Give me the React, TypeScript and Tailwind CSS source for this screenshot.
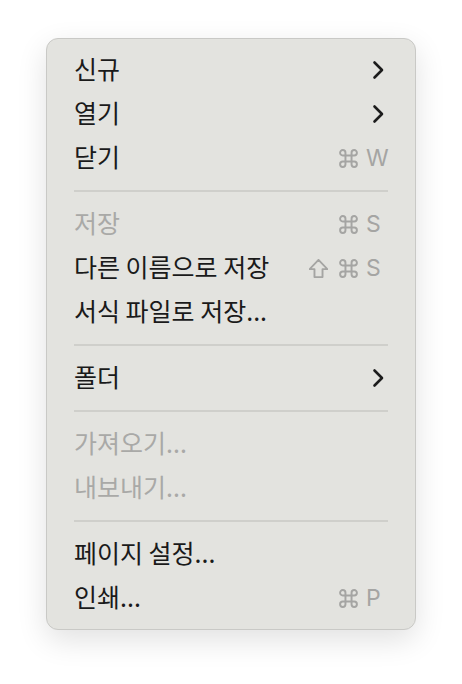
import React from "react";

type Item =
  | { kind: "sep" }
  | {
      kind: "item";
      label: string;
      disabled?: boolean;
      submenu?: boolean;
      shift?: boolean;
      key?: string;
    };

const items: Item[] = [
  { kind: "item", label: "신규", submenu: true },
  { kind: "item", label: "열기", submenu: true },
  { kind: "item", label: "닫기", key: "W" },
  { kind: "sep" },
  { kind: "item", label: "저장", disabled: true, key: "S" },
  { kind: "item", label: "다른 이름으로 저장", shift: true, key: "S" },
  { kind: "item", label: "서식 파일로 저장..." },
  { kind: "sep" },
  { kind: "item", label: "폴더", submenu: true },
  { kind: "sep" },
  { kind: "item", label: "가져오기...", disabled: true },
  { kind: "item", label: "내보내기...", disabled: true },
  { kind: "sep" },
  { kind: "item", label: "페이지 설정..." },
  { kind: "item", label: "인쇄...", key: "P" },
];

function Chevron() {
  return (
    <svg width="14" height="20" viewBox="0 0 14 20" className="mr-[3px] text-[#1c1c1c]">
      <path
        d="M2.5 2.5 L10 10 L2.5 17.5"
        fill="none"
        stroke="currentColor"
        strokeWidth="2.6"
        strokeLinecap="round"
        strokeLinejoin="round"
      />
    </svg>
  );
}

// command key glyph
function Cmd() {
  return (
    <svg width="19" height="19" viewBox="1.2 1.2 15.6 15.6">
      <path
        d="M6.5 6.5 H11.5 V11.5 H6.5 Z M6.5 6.5 V4.3 A2.2 2.2 0 1 0 4.3 6.5 H6.5 M11.5 6.5 V4.3 A2.2 2.2 0 1 1 13.7 6.5 H11.5 M6.5 11.5 V13.7 A2.2 2.2 0 1 1 4.3 11.5 H6.5 M11.5 11.5 V13.7 A2.2 2.2 0 1 0 13.7 11.5 H11.5"
        fill="none"
        stroke="currentColor"
        strokeWidth="1.6"
        strokeLinejoin="round"
      />
    </svg>
  );
}

function Shift() {
  return (
    <svg width="19" height="19" viewBox="0.5 0.5 17 17">
      <path
        d="M9 1.3 L17 9.6 H12.6 V16.7 H5.4 V9.6 H1 Z"
        fill="none"
        stroke="currentColor"
        strokeWidth="1.7"
        strokeLinejoin="round"
      />
    </svg>
  );
}

export default function App() {
  return (
    <div className="min-h-[684px] w-[462px] bg-white pt-[38px] pl-[46px]">
      <div
        className="w-[370px] rounded-[12px] border border-[#c9c9c6] bg-[#e3e3df] py-[9px] shadow-[0_10px_30px_rgba(0,0,0,0.12)]"
        style={{ fontFamily: '"Noto Sans CJK KR", "Noto Sans", sans-serif' }}
      >
        {items.map((it, i) =>
          it.kind === "sep" ? (
            <div key={i} className="flex h-[22px] items-center px-[27px]">
              <div className="h-[2px] w-full bg-[#cfcfcb]" />
            </div>
          ) : (
            <div
              key={i}
              className={`flex h-[44px] items-center justify-between pl-[27px] pr-[26px] text-[25px] ${
                it.disabled ? "text-[#a9a9a7]" : "text-[#1a1a1a]"
              }`}
            >
              <span className="-mt-[3px] leading-none">{it.label}</span>
              {it.submenu && <Chevron />}
              {it.key && (
                <span className="flex items-center gap-[8px] text-[#a5a5a3]">
                  {it.shift && <span className="mr-[3px]"><Shift /></span>}
                  <Cmd />
                  <span
                    className="w-[23px] text-[23px] leading-none"
                    style={{ fontFamily: '"Inter", "Liberation Sans", sans-serif' }}
                  >
                    {it.key}
                  </span>
                </span>
              )}
            </div>
          )
        )}
      </div>
    </div>
  );
}
